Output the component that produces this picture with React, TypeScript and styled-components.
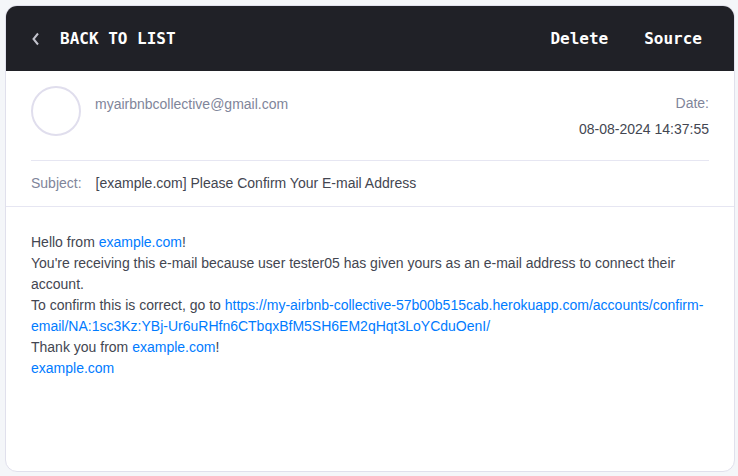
import React from 'react';
import styled, { createGlobalStyle } from 'styled-components';

const GlobalStyle = createGlobalStyle`
  *, *::before, *::after { box-sizing: border-box; }
  html, body, #root { height: 100%; }
  body {
    margin: 0;
    background: #f4f6f9;
    font-family: "Liberation Sans", Arial, Helvetica, sans-serif;
    font-size: 14px;
    line-height: 21px;
    color: #434651;
  }
`;

const Page = styled.main`
  display: flex;
  min-height: 100%;
  padding: 5px 3px 4px 5px;
`;

const MailCard = styled.article`
  flex: 1;
  min-width: 0;
  overflow: hidden;
  background: #fff;
  border: 1px solid #e0e0ec;
  border-radius: 12px;
`;

const Toolbar = styled.nav`
  display: flex;
  align-items: center;
  justify-content: space-between;
  height: 65px;
  padding: 0 32px 0 25px;
  background: #202127;
`;

const Actions = styled.div`
  display: flex;
  gap: 36px;
`;

const ToolbarButton = styled.button`
  display: flex;
  align-items: center;
  gap: 19px;
  padding: 0;
  border: 0;
  background: none;
  color: #fff;
  font: bold 16px/24px "DejaVu Sans Mono", monospace;
  cursor: pointer;
`;

const Envelope = styled.header`
  display: flex;
  gap: 14px;
  margin: 0 25px;
  padding: 15px 0 20px;
  border-bottom: 1px solid #e6e6f2;
`;

const Avatar = styled.div`
  width: 50px;
  height: 50px;
  border: 2px solid #e0deed;
  border-radius: 50%;
`;

const Sender = styled.div`
  flex: 1;
  padding-top: 8px;
  color: #7f859a;
`;

const Received = styled.div`
  display: flex;
  flex-direction: column;
  gap: 5px;
  padding-top: 7px;
  text-align: right;
`;

const Label = styled.span`
  color: #7f859a;
`;

const Subject = styled.div`
  display: flex;
  gap: 14px;
  padding: 12px 25px;
  border-bottom: 1px solid #e6e6f2;
`;

const Message = styled.section`
  padding: 25px;
  p { margin: 0; }
`;

const MailLink = styled.a`
  color: #007bff;
  text-decoration: none;
`;

export default function App() {
  return (
    <>
      <GlobalStyle />
      <Page>
        <MailCard>
          <Toolbar>
            <ToolbarButton type="button">
              <svg width="10" height="14" viewBox="0 0 10 14" fill="none" stroke="#c2c2cc" strokeWidth="2" aria-hidden="true">
                <path d="M7 1.5 2.5 7 7 12.5" />
              </svg>
              BACK TO LIST
            </ToolbarButton>
            <Actions>
              <ToolbarButton type="button">Delete</ToolbarButton>
              <ToolbarButton type="button">Source</ToolbarButton>
            </Actions>
          </Toolbar>
          <Envelope>
            <Avatar />
            <Sender>myairbnbcollective@gmail.com</Sender>
            <Received>
              <Label>Date:</Label>
              <time dateTime="2024-08-08T14:37:55">08-08-2024 14:37:55</time>
            </Received>
          </Envelope>
          <Subject>
            <Label>Subject:</Label>
            <span>[example.com] Please Confirm Your E-mail Address</span>
          </Subject>
          <Message>
            <p>Hello from <MailLink href="#">example.com</MailLink>!</p>
            <p>You're receiving this e-mail because user tester05 has given yours as an e-mail address to connect their account.</p>
            <p>To confirm this is correct, go to <MailLink href="#">https://my-airbnb-collective-57b00b515cab.herokuapp.com/accounts/confirm-email/NA:1sc3Kz:YBj-Ur6uRHfn6CTbqxBfM5SH6EM2qHqt3LoYCduOenI/</MailLink></p>
            <p>Thank you from <MailLink href="#">example.com</MailLink>!</p>
            <p><MailLink href="#">example.com</MailLink></p>
          </Message>
        </MailCard>
      </Page>
    </>
  );
}
